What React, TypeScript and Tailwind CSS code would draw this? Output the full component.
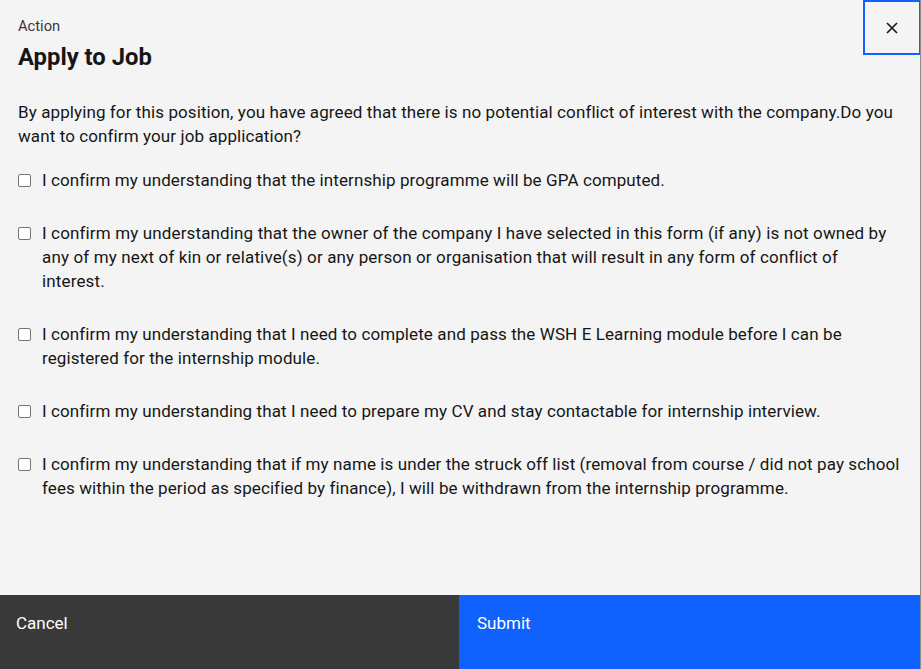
import React from "react";

const items = [
  { t: "I confirm my understanding that the internship programme will be GPA computed.", c: "tracking-[0.1px]" },
  { t: "I confirm my understanding that the owner of the company I have selected in this form (if any) is not owned by any of my next of kin or relative(s) or any person or organisation that will result in any form of conflict of interest.", c: "tracking-[0.14px]" },
  { t: "I confirm my understanding that I need to complete and pass the WSH E Learning module before I can be registered for the internship module.", c: "tracking-[0.1px]" },
  { t: "I confirm my understanding that I need to prepare my CV and stay contactable for internship interview.", c: "tracking-[0.1px]" },
  { t: "I confirm my understanding that if my name is under the struck off list (removal from course / did not pay school fees within the period as specified by finance), I will be withdrawn from the internship programme.", c: "tracking-[0.1px]" },
];

export default function App() {
  return (
    <div
      className="w-[921px] h-[669px] flex bg-[#f4f4f4] text-[#161616] overflow-hidden"
      style={{ fontFamily: "Roboto, 'Noto Sans', sans-serif" }}
    >
      <div className="w-[920px] h-full flex flex-col">
        <div className="flex justify-between">
          <div className="pl-[18px] pt-[17px]">
            <div className="text-[14.7px] leading-[18px] text-[#393939]">Action</div>
            <div className="text-[23.8px] leading-[28px] font-bold mt-[8px]">Apply to Job</div>
          </div>
          <button className="w-[58px] h-[55px] border-2 border-[#0f62fe] flex items-center justify-center mr-[-1px]">
            <svg width="16" height="16" viewBox="0 0 16 16" fill="none" stroke="#161616" strokeWidth="1.6">
              <path d="M3 3L13 13M13 3L3 13" />
            </svg>
          </button>
        </div>
        <div className="pl-[18px] pr-[19px] mt-[29px] flex-1">
          <p className="text-[17px] leading-[24px] tracking-[0.1px]">
            By applying for this position, you have agreed that there is no potential conflict of interest with the company.Do you want to confirm your job application?
          </p>
          <div className="flex flex-col gap-[29px] mt-[20px]">
            {items.map((it, i) => (
              <label key={i} className="flex items-start gap-[11px]">
                <span className="mt-[6px] w-[13px] h-[13px] shrink-0 rounded-[2px] border border-[#767676] bg-white" />
                <span className={`text-[17px] leading-[24px] ${it.c}`}>{it.t}</span>
              </label>
            ))}
          </div>
        </div>
        <div className="h-[74px] flex shrink-0">
          <div className="w-[459px] bg-[#393939] text-white text-[17px] pl-[16px] pt-[19px] leading-[18px]">Cancel</div>
          <div className="flex-1 bg-[#0f62fe] text-white text-[17px] pl-[18px] pt-[19px] leading-[18px]">Submit</div>
        </div>
      </div>
      <div className="w-[1px] h-full bg-[#8d8d8d]" />
    </div>
  );
}
